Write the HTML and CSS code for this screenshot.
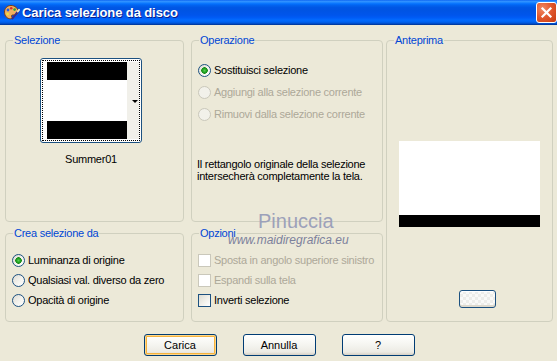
FILE: index.html
```html
<!DOCTYPE html>
<html lang="it">
<head>
<meta charset="utf-8">
<title>Carica selezione da disco</title>
<link rel="stylesheet" href="styles.css">
</head>
<body>
<div class="window">
  <div class="titlebar">
    <svg class="app-icon" width="17" height="17" viewBox="0 0 17 17">
      <path d="M8 1.5C4 1.5 1.5 4.3 1.5 8.2c0 3.8 2.6 6.6 6 6.6 1.6 0 1.8-1.1 1.2-2-.6-.9-.2-1.8 1-1.8h1.8c2.3 0 3.5-1.5 3.5-3.6C15 4.3 12 1.5 8 1.5z" fill="#F0B060" stroke="#7A3C12" stroke-width="1"/>
      <circle cx="5" cy="6" r="1.4" fill="#2A5BD8"/>
      <circle cx="8.2" cy="4.3" r="1.3" fill="#D8302A"/>
      <circle cx="11.6" cy="5.6" r="1.3" fill="#2FA43A"/>
      <circle cx="4.6" cy="10" r="1.3" fill="#F2E23A"/>
      <path d="M9.5 14.5l6-8" stroke="#3A2A8A" stroke-width="2" stroke-linecap="round"/>
      <path d="M14.8 7.4l1.2-1.6" stroke="#E8E0C0" stroke-width="2" stroke-linecap="round"/>
    </svg>
    <span class="title">Carica selezione da disco</span>
    <div class="close">
      <svg width="13" height="13" viewBox="0 0 13 13"><path d="M2.5 2.5l8 8M10.5 2.5l-8 8" stroke="#fff" stroke-width="2.2" stroke-linecap="square"/></svg>
    </div>
  </div>

  <div class="client">
    <div class="groups">
      <fieldset class="group g-sel">
        <legend>Selezione</legend>
        <div class="thumb-wrap">
          <div class="thumb">
            <div class="focus">
              <div class="pic">
                <div class="bar"></div>
                <div class="bar"></div>
              </div>
              <div class="strip"><span class="arrow"></span></div>
            </div>
          </div>
          <div class="thumb-name">Summer01</div>
        </div>
      </fieldset>

      <fieldset class="group g-op">
        <legend>Operazione</legend>
        <div class="opt-list op-list">
          <div class="row"><span class="radio on"></span><span>Sostituisci selezione</span></div>
          <div class="row disabled"><span class="radio"></span><span>Aggiungi alla selezione corrente</span></div>
          <div class="row disabled"><span class="radio"></span><span>Rimuovi dalla selezione corrente</span></div>
        </div>
        <p class="note">Il rettangolo originale della selezione<br>intersecherà completamente la tela.</p>
      </fieldset>

      <fieldset class="group g-prev">
        <legend>Anteprima</legend>
        <div class="preview"><div class="preview-bar"></div></div>
        <div class="mini-btn"></div>
      </fieldset>

      <fieldset class="group g-crea">
        <legend>Crea selezione da</legend>
        <div class="opt-list small-list">
          <div class="row"><span class="radio on"></span><span>Luminanza di origine</span></div>
          <div class="row"><span class="radio"></span><span>Qualsiasi val. diverso da zero</span></div>
          <div class="row"><span class="radio"></span><span>Opacità di origine</span></div>
        </div>
      </fieldset>

      <fieldset class="group g-opt">
        <legend>Opzioni</legend>
        <div class="opt-list small-list">
          <div class="row disabled"><span class="check"></span><span>Sposta in angolo superiore sinistro</span></div>
          <div class="row disabled"><span class="check"></span><span>Espandi sulla tela</span></div>
          <div class="row"><span class="check"></span><span>Inverti selezione</span></div>
        </div>
      </fieldset>
    </div>

    <div class="buttons">
      <div class="btn default">Carica</div>
      <div class="btn">Annulla</div>
      <div class="btn">?</div>
    </div>
  </div>

  <div class="watermark">
    <div class="wm-name">Pinuccia</div>
    <div class="wm-url">www.maidiregrafica.eu</div>
  </div>
</div>
</body>
</html>
```

FILE: styles.css
```css
html, body {
  margin: 0;
  padding: 0;
  background: #ECE9D8;
}

body {
  font-family: "Liberation Sans", Arial, sans-serif;
  font-size: 11px;
  letter-spacing: -0.25px;
  color: #000;
}

.window {
  position: relative;
  width: 557px;
  height: 361px;
  background: #ECE9D8;
  overflow: hidden;
}

/* Title bar */
.titlebar {
  height: 25px;
  display: flex;
  align-items: center;
  padding-left: 3px;
  background: linear-gradient(to bottom,
    #0058EE 0%, #3593FF 4%, #288EFF 8%, #127DFF 12%, #036FFC 16%,
    #0262EE 22%, #0057E5 30%, #0054E3 40%, #0055EB 60%, #005BF5 70%,
    #026AFE 80%, #0062EF 88%, #0052D6 93%, #0040AB 97%, #003092 100%);
}

.app-icon {
  flex: none;
}

.title {
  margin-left: 2px;
  color: #fff;
  font-weight: bold;
  font-size: 13px;
  letter-spacing: -0.1px;
  text-shadow: 1px 1px 0 #0A1E8C;
}

.close {
  margin-left: auto;
  width: 21px;
  height: 21px;
  box-sizing: border-box;
  border: 1px solid #fff;
  border-radius: 3px;
  background: radial-gradient(circle at 30% 30%, #F08A64 0%, #E25A30 45%, #C83A10 100%);
  display: flex;
  align-items: center;
  justify-content: center;
}

/* Client area */
.client {
  padding: 8px 0 0 5px;
}

.groups {
  display: grid;
  grid-template-columns: 186px 195px 167px;
  grid-template-rows: 189px 96px;
  row-gap: 4px;
}

fieldset.group {
  margin: 0;
  padding: 0;
  min-width: 0;
  box-sizing: border-box;
  border: 1px solid #D0D0BF;
  border-radius: 4px;
}

fieldset.group legend {
  margin-left: 7px;
  padding: 0 1px;
  color: #0046D5;
  font-size: 11px;
  line-height: 14px;
}

.g-sel, .g-crea { width: 179px; }
.g-op, .g-opt { width: 192px; }
.g-prev {
  width: 167px;
  grid-column: 3;
  grid-row: 1 / 3;
}
.g-sel { grid-column: 1; grid-row: 1; }
.g-op { grid-column: 2; grid-row: 1; }
.g-crea { grid-column: 1; grid-row: 2; }
.g-opt { grid-column: 2; grid-row: 2; }

/* Selection thumbnail */
.thumb-wrap {
  width: 102px;
  margin: 11px 0 0 34px;
}

.thumb {
  width: 102px;
  height: 85px;
  box-sizing: border-box;
  border: 1px solid #1C5180;
  border-radius: 3px;
  padding: 1px;
  background: #fff;
}

.focus {
  height: 100%;
  box-sizing: border-box;
  border: 1px dotted #000;
  padding: 1px 0 1px 4px;
  display: flex;
}

.pic {
  flex: 1;
  display: flex;
  flex-direction: column;
  justify-content: space-between;
  background: #fff;
}

.bar {
  height: 18px;
  background: #000;
}

.strip {
  width: 11px;
  background: #F1F0EA;
  display: flex;
  align-items: center;
  justify-content: flex-end;
  padding-right: 1px;
}

.arrow {
  width: 0;
  height: 0;
  border-left: 3px solid transparent;
  border-right: 3px solid transparent;
  border-top: 3px solid #000;
  margin-top: 2px;
}

.thumb-name {
  margin-top: 10px;
  line-height: 13px;
  text-align: center;
}

/* Option lists */
.opt-list {
  display: flex;
  flex-direction: column;
  padding-left: 6px;
}

.op-list { margin-top: 12px; }
.op-list .row { height: 22px; }

.small-list { margin-top: 10px; }
.small-list .row { height: 20px; }

.row {
  display: flex;
  align-items: center;
  gap: 3px;
  white-space: nowrap;
}

.row.disabled {
  color: #ACA899;
}

.radio {
  flex: none;
  width: 13px;
  height: 13px;
  box-sizing: border-box;
  border-radius: 50%;
  border: 1px solid #1C5180;
  background: linear-gradient(135deg, #DCDBD3 0%, #F4F3EE 55%, #FFFFFF 100%);
}

.radio.on {
  background:
    radial-gradient(circle at 50% 50%, #55D151 0, #21A121 2px, #1A8A1A 3px, transparent 3.5px),
    linear-gradient(135deg, #DCDBD3 0%, #F4F3EE 55%, #FFFFFF 100%);
}

.disabled .radio {
  border-color: #CAC8BB;
  background: #F2F1EA;
}

.check {
  flex: none;
  width: 13px;
  height: 13px;
  box-sizing: border-box;
  border: 1px solid #1C5180;
  background: linear-gradient(135deg, #DCDBD3 0%, #F2F1EB 55%, #FFFFFF 100%);
}

.disabled .check {
  border-color: #CAC8BB;
  background: #FFFFFF;
}

.note {
  margin: 33px 0 0 5px;
  line-height: 12px;
  white-space: nowrap;
}

/* Preview */
.preview {
  width: 141px;
  height: 86px;
  margin: 94px auto 0;
  background: #fff;
  display: flex;
  flex-direction: column;
  justify-content: flex-end;
}

.preview-bar {
  height: 12px;
  background: #000;
}

.mini-btn {
  width: 37px;
  height: 18px;
  box-sizing: border-box;
  margin: 63px 0 0 72px;
  border: 1px solid #1C5180;
  border-radius: 3px;
  background:
    repeating-conic-gradient(#EDEDEA 0 25%, #FAFAF8 0 50%) 0 0 / 6px 6px;
  box-shadow: inset 0 -2px 0 #DCD8CC, inset 0 1px 0 #fff;
}

/* Buttons */
.buttons {
  display: flex;
  justify-content: center;
  gap: 26px;
  margin-top: 12px;
  padding-right: 4px;
}

.btn {
  width: 73px;
  height: 22px;
  box-sizing: border-box;
  border: 1px solid #003C74;
  border-radius: 3px;
  background: linear-gradient(to bottom, #FFFFFF 0%, #F7F7F3 40%, #ECEBE4 85%, #D6D0C5 100%);
  display: flex;
  align-items: center;
  justify-content: center;
  letter-spacing: 0;
}

.btn.default {
  box-shadow: inset 0 0 0 1px #FFD78A, inset 0 0 0 2px #F5B33E;
}

/* Watermark overlay */
.watermark {
  position: absolute;
  left: 228px;
  top: 211px;
  pointer-events: none;
}

.wm-name {
  margin-left: 30px;
  font-size: 20px;
  line-height: 20px;
  letter-spacing: 0;
  color: #9CA1BA;
}

.wm-url {
  margin-top: 3px;
  font-size: 12px;
  line-height: 12px;
  font-style: italic;
  letter-spacing: 0;
  color: #7C819C;
}
```
